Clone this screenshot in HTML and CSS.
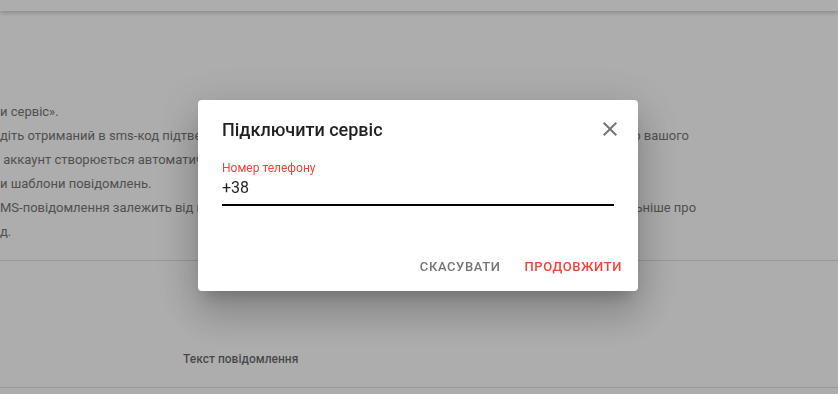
FILE: index.html
```html
<!DOCTYPE html>
<html lang="uk">
<head>
    <meta charset="UTF-8">
    <meta name="viewport" content="width=device-width, initial-scale=1.0">
    <title>Підключити сервіс</title>
    <link rel="stylesheet" href="styles.css">
</head>
<body>
    <header class="topbar"></header>

    <div class="page">
        <div class="steps">
            <p>и сервіс».</p>
            <p>діть отриманий в sms-код підтвердження в поле нижче, а потім сервіс буде автоматично підключено до вашого</p>
            <p>&nbsp;аккаунт створюється автоматично</p>
            <p>и шаблони повідомлень.</p>
            <p>MS-повідомлення залежить від вашого тарифного плану мобільного оператора зв'язку. Дізнайся детальніше про</p>
            <p>д.</p>
        </div>

        <div class="table-head">
            <div class="col-first"></div>
            <div class="col-text">Текст повідомлення</div>
        </div>
    </div>

    <div class="overlay">
        <div class="dialog">
            <div class="dialog-title">
                <h2>Підключити сервіс</h2>
                <button class="close-btn" aria-label="Закрити">
                    <svg viewBox="0 0 24 24" width="24" height="24">
                        <path d="M19 6.41L17.59 5 12 10.59 6.41 5 5 6.41 10.59 12 5 17.59 6.41 19 12 13.41 17.59 19 19 17.59 13.41 12z" fill="currentColor"/>
                    </svg>
                </button>
            </div>

            <div class="field">
                <label for="phone">Номер телефону</label>
                <input id="phone" type="tel" value="+38">
            </div>

            <div class="dialog-actions">
                <button class="btn btn-cancel">Скасувати</button>
                <button class="btn btn-primary">Продовжити</button>
            </div>
        </div>
    </div>
</body>
</html>
```

FILE: styles.css
```css
body {
    font-family: Roboto, "Noto Sans", sans-serif;
    margin: 0;
    padding: 0;
    background-color: #fff;
    overflow: hidden;
}

.topbar {
    height: 11px;
    background-color: #fff;
    box-shadow: 0 2px 4px rgba(0, 0, 0, 0.2);
}

.page {
    padding-top: 89px;
}

.steps {
    border-bottom: 1px solid #e0e0e0;
    padding-bottom: 16px;
}

.steps p {
    margin: 0;
    font-size: 13px;
    line-height: 24px;
    color: #777;
    white-space: nowrap;
}

.table-head {
    display: flex;
    align-items: center;
    height: 56px;
    margin-top: 70px;
    border-bottom: 1px solid #e0e0e0;
}

.col-first {
    width: 183px;
}

.col-text {
    font-size: 12px;
    font-weight: 500;
    color: rgba(0, 0, 0, 0.6);
}

.overlay {
    position: fixed;
    top: 0;
    left: 0;
    right: 0;
    bottom: 0;
    background-color: rgba(0, 0, 0, 0.32);
    display: flex;
    justify-content: center;
    align-items: center;
    padding-right: 2px;
    padding-bottom: 3px;
}

.dialog {
    width: 440px;
    box-sizing: border-box;
    background-color: #fff;
    border-radius: 4px;
    box-shadow: 0 11px 15px -7px rgba(0, 0, 0, 0.2),
                0 24px 38px 3px rgba(0, 0, 0, 0.14),
                0 9px 46px 8px rgba(0, 0, 0, 0.12);
}

.dialog-title {
    display: flex;
    justify-content: space-between;
    align-items: center;
    padding: 17px 16px 0 24px;
}

.dialog-title h2 {
    margin: 0;
    font-size: 18px;
    font-weight: 500;
    color: rgba(0, 0, 0, 0.87);
}

.close-btn {
    width: 24px;
    height: 24px;
    padding: 0;
    border: none;
    background: none;
    color: #757575;
    cursor: pointer;
}

.close-btn svg {
    display: block;
}

.field {
    display: flex;
    flex-direction: column;
    padding: 20px 24px 0;
}

.field label {
    font-size: 12px;
    color: #f44336;
    line-height: 14px;
}

.field input {
    font-family: inherit;
    font-size: 16px;
    color: rgba(0, 0, 0, 0.87);
    border: none;
    border-bottom: 2px solid #000;
    padding: 3px 0 7px;
    outline: none;
}

.dialog-actions {
    display: flex;
    justify-content: flex-end;
    gap: 8px;
    padding: 42px 8px 7px;
}

.btn {
    font-family: inherit;
    font-size: 13px;
    font-weight: 500;
    letter-spacing: 0.6px;
    text-transform: uppercase;
    height: 36px;
    padding: 0 8px;
    border: none;
    background: none;
    border-radius: 4px;
    cursor: pointer;
}

.btn-cancel {
    color: #757575;
}

.btn-primary {
    color: #f44336;
}
```
